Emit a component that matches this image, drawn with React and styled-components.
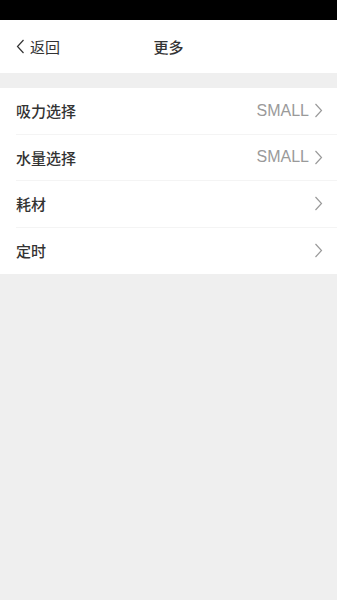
import React from 'react';
import styled, { createGlobalStyle } from 'styled-components';

const GlobalStyle = createGlobalStyle`
  html, body {
    margin: 0;
    padding: 0;
    background-color: #efefef;
    font-family: "Noto Sans CJK SC", "Noto Sans", sans-serif;
  }
`;

const Page = styled.div`
  min-height: 600px;
  background-color: #efefef;
`;

const StatusBar = styled.div`
  height: 20px;
  background-color: #000;
`;

const Header = styled.div`
  position: relative;
  height: 53px;
  background-color: #fff;
  display: flex;
  align-items: center;
  justify-content: center;
`;

const BackButton = styled.a`
  position: absolute;
  left: 16px;
  top: 0;
  bottom: 0;
  display: flex;
  align-items: center;
  gap: 5px;
  color: #333;
  font-size: 15px;
  text-decoration: none;
`;

const Title = styled.h1`
  margin: 0;
  font-size: 15px;
  font-weight: 500;
  color: #333;
`;

const List = styled.div`
  margin-top: 15px;
  background-color: #fff;
`;

const Row = styled.div`
  height: 46.5px;
  margin-left: 16px;
  padding-right: 14px;
  display: flex;
  align-items: center;
  justify-content: space-between;
  border-bottom: ${(p) => (p.last ? 'none' : '1px solid #f4f4f4')};
  box-sizing: border-box;
`;

const Label = styled.span`
  font-size: 15px;
  font-weight: 500;
  color: #333;
`;

const Right = styled.div`
  display: flex;
  align-items: center;
  gap: 5px;
`;

const Value = styled.span`
  font-family: "Liberation Sans", "Noto Sans", sans-serif;
  font-size: 16px;
  color: #9a9a9a;
`;

const Chevron = ({ color = '#9a9a9a', left = false }) => (
  <svg width="9" height="15" viewBox="0 0 9 15">
    <path
      d={left ? 'M7.5 1 L1.5 7.5 L7.5 14' : 'M1.5 1 L7.5 7.5 L1.5 14'}
      fill="none"
      stroke={color}
      strokeWidth="1.2"
    />
  </svg>
);

const items = [
  { label: '吸力选择', value: 'SMALL' },
  { label: '水量选择', value: 'SMALL' },
  { label: '耗材' },
  { label: '定时' },
];

export default function App() {
  return (
    <Page>
      <GlobalStyle />
      <StatusBar />
      <Header>
        <BackButton>
          <Chevron color="#333" left />
          返回
        </BackButton>
        <Title>更多</Title>
      </Header>
      <List>
        {items.map((item, i) => (
          <Row key={item.label} last={i === items.length - 1}>
            <Label>{item.label}</Label>
            <Right>
              {item.value && <Value>{item.value}</Value>}
              <Chevron />
            </Right>
          </Row>
        ))}
      </List>
    </Page>
  );
}
